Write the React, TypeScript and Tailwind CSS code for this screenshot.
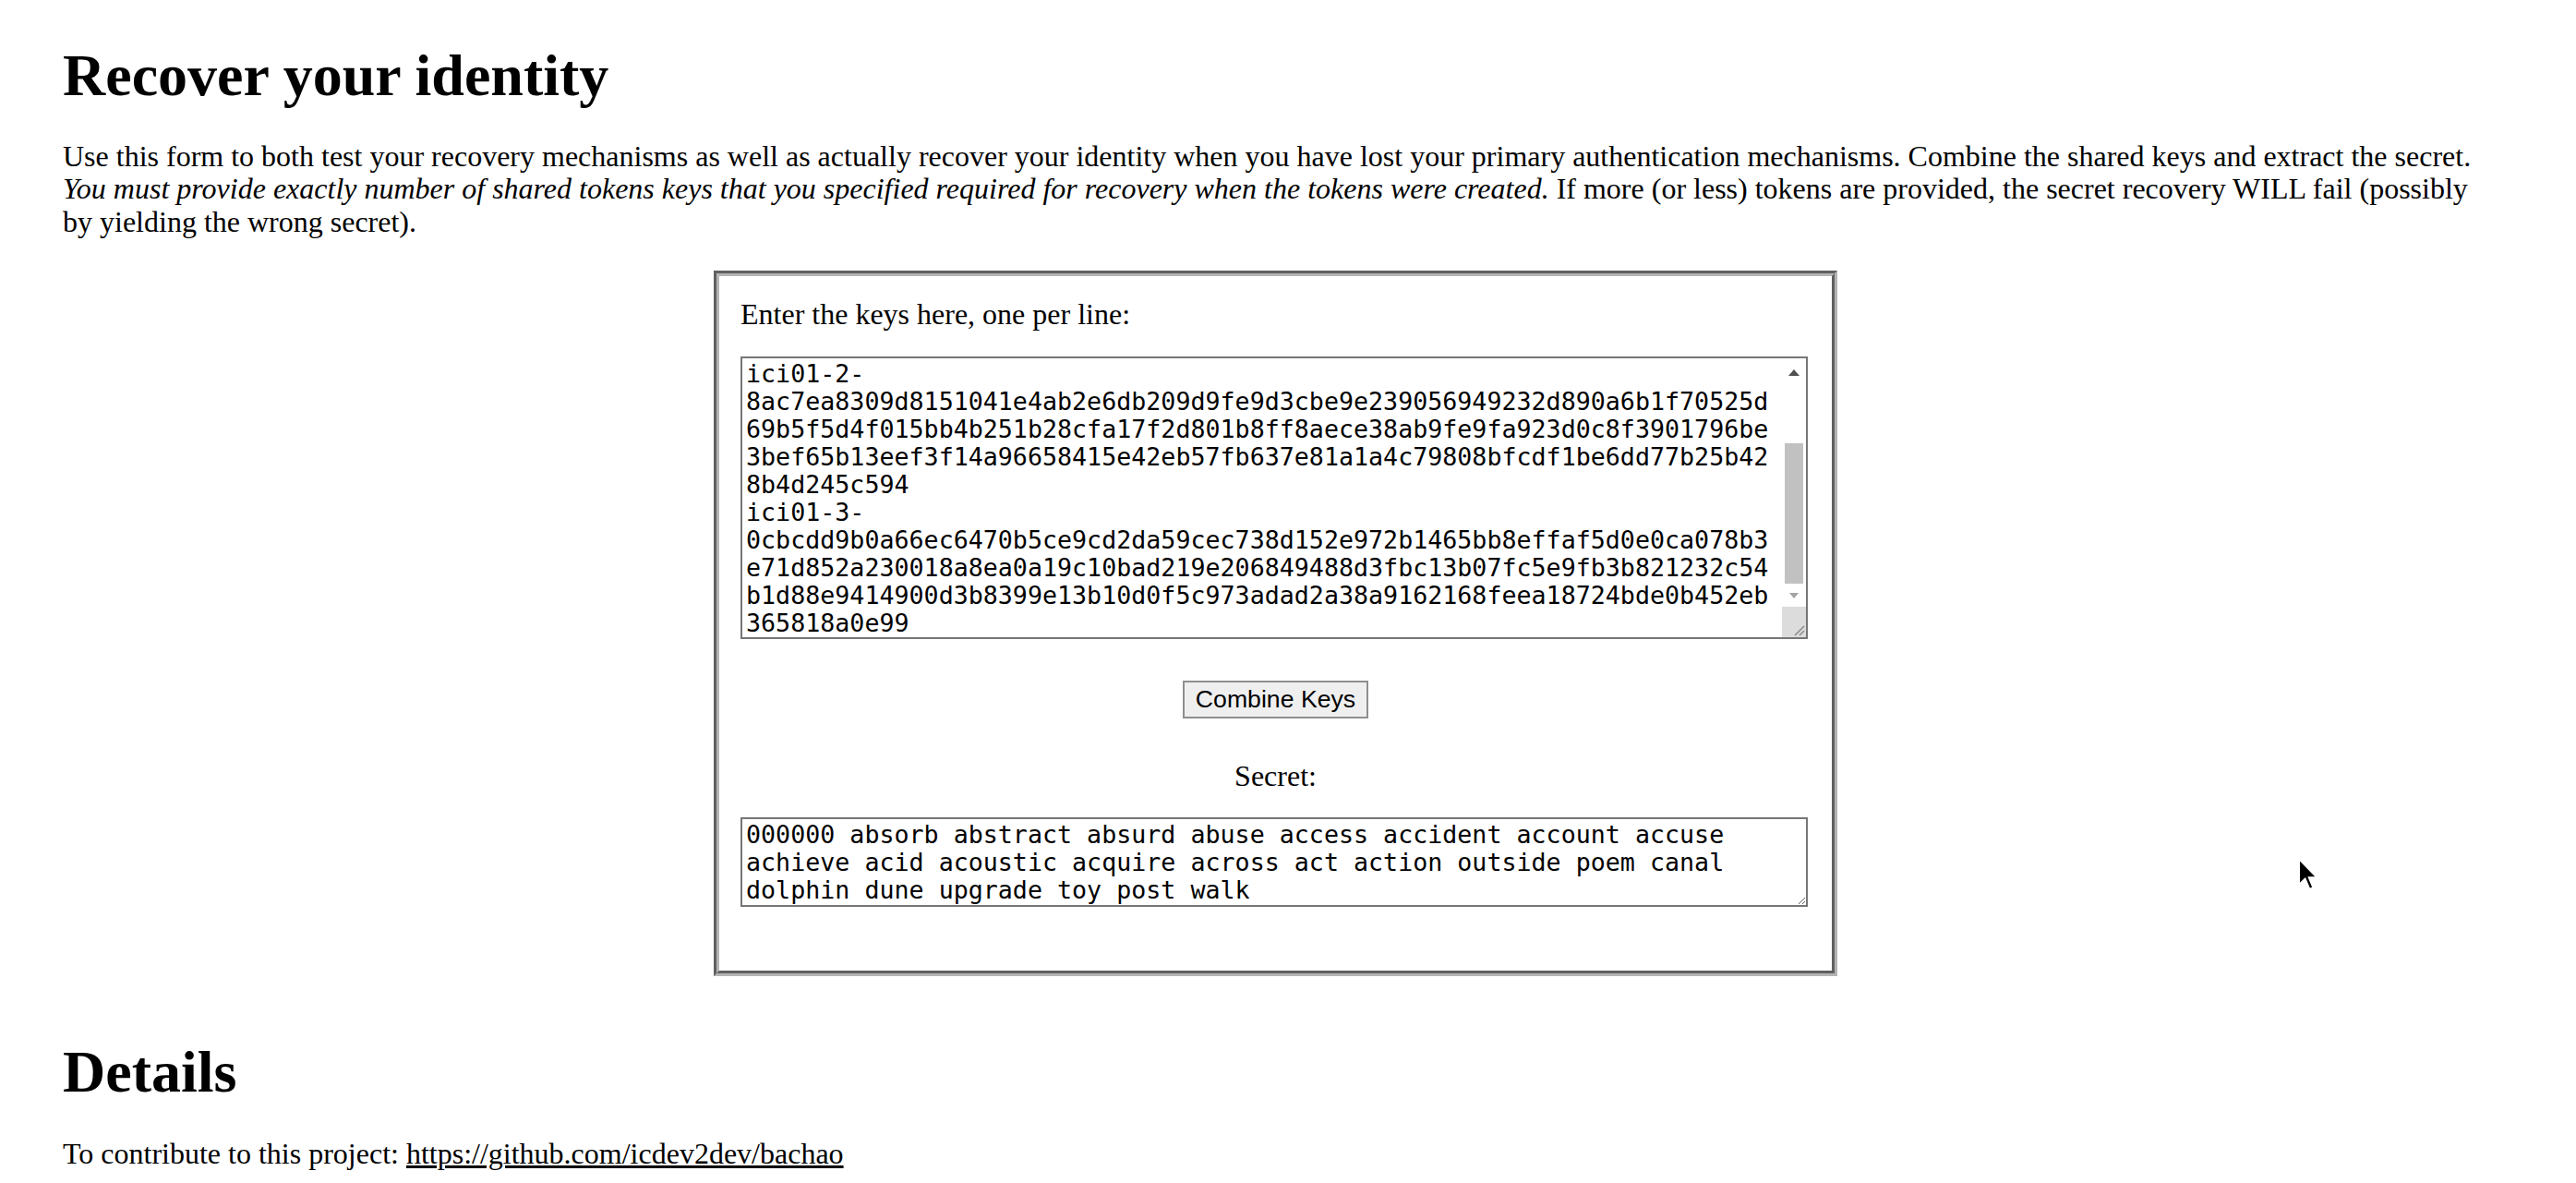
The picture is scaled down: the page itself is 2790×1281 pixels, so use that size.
import React from "react";

const keys = [
  "ici01-2-8ac7ea8309d8151041e4ab2e6db209d9fe9d3cbe9e239056949232d890a6b1f70525d69b5f5d4f015bb4b251b28cfa17f2d801b8ff8aece38ab9fe9fa923d0c8f3901796be3bef65b13eef3f14a96658415e42eb57fb637e81a1a4c79808bfcdf1be6dd77b25b428b4d245c594",
  "ici01-3-0cbcdd9b0a66ec6470b5ce9cd2da59cec738d152e972b1465bb8effaf5d0e0ca078b3e71d852a230018a8ea0a19c10bad219e206849488d3fbc13b07fc5e9fb3b821232c54b1d88e9414900d3b8399e13b10d0f5c973adad2a38a9162168feea18724bde0b452eb365818a0e99",
].join("\n");

const secret =
  "000000 absorb abstract absurd abuse access accident account accuse achieve acid acoustic acquire across act action outside poem canal dolphin dune upgrade toy post walk";

// classic scrollbar drawn over the keys box (the box is scrolled to its end)
const Scrollbar = () => (
  <div className="pointer-events-none absolute top-[2px] right-[2px] bottom-[2px] flex w-[26px] flex-col bg-white">
    <div className="flex h-[30px] items-center justify-center">
      <svg width="12" height="7" viewBox="0 0 12 7">
        <path d="M6 0 L12 7 L0 7 Z" fill="#505050" />
      </svg>
    </div>
    <div className="h-[62px]" />
    <div className="mx-[3px] h-[152px] bg-[#c1c1c1]" />
    <div className="flex h-[25px] items-center justify-center">
      <svg width="10" height="6" viewBox="0 0 10 6">
        <path d="M0 0 L10 0 L5 6 Z" fill="#a3a3a3" />
      </svg>
    </div>
    <div className="relative flex-1 bg-[#dcdcdc]">
      <svg className="absolute right-[1px] bottom-[1px]" width="14" height="14" viewBox="0 0 14 14">
        <path d="M13 3 L3 13 M13 8 L8 13" stroke="#8a8a8a" strokeWidth="1.5" />
      </svg>
    </div>
  </div>
);

const App = () => {
  return (
    <div className="relative min-h-[1281px] bg-white text-black font-['Liberation_Serif',serif] text-[32px] leading-[35.5px]">
      <div className="ml-[68px] w-[2627px] pt-[46px]">
        <h1 className="text-[64px] font-bold leading-[71px]">Recover your identity</h1>
        <p className="mt-[34.5px]">
          Use this form to both test your recovery mechanisms as well as actually recover your identity when you have
          lost your primary authentication mechanisms. Combine the shared keys and extract the secret.{" "}
          <em>
            You must provide exactly number of shared tokens keys that you specified required for recovery when the
            tokens were created.
          </em>{" "}
          If more (or less) tokens are provided, the secret recovery WILL fail (possibly by yielding the wrong secret).
        </p>

        <div className="mx-auto mt-[35px] w-[1217px] border-[6px] border-[#b4b4b4] [border-style:groove] px-[23px] pt-[23.5px] pb-[69px]">
          <p>Enter the keys here, one per line:</p>
          <div className="relative mt-[28px] w-[1156px]">
            <textarea
              readOnly
              rows={10}
              defaultValue={keys}
              className="block h-[306px] w-[1156px] resize-none overflow-hidden border-2 border-[#767676] bg-white pt-[2px] pb-[1px] pl-[4px] pr-[32px] font-['DejaVu_Sans_Mono',monospace] text-[26.67px] leading-[30px] text-black outline-none"
            />
            <Scrollbar />
          </div>
          <div className="mt-[45px] flex justify-center">
            <button
              type="button"
              className="h-[41px] border-2 border-[#8f8f8f] bg-[#efefef] px-[12px] font-['Liberation_Sans',Arial,sans-serif] text-[26.67px] leading-none text-black"
            >
              Combine Keys
            </button>
          </div>
          <p className="mt-[44.5px] text-center">Secret:</p>
          <textarea
            readOnly
            rows={3}
            defaultValue={secret}
            className="mt-[27px] block h-[97px] w-[1156px] border-2 border-[#767676] bg-white pt-[2px] pb-[1px] px-[4px] font-['DejaVu_Sans_Mono',monospace] text-[26.67px] leading-[30px] text-black outline-none"
          />
        </div>

        <h1 className="mt-[68px] text-[64px] font-bold leading-[71px]">Details</h1>
        <p className="mt-[35.5px]">
          To contribute to this project:{" "}
          <a href="#" className="underline">
            https://github.com/icdev2dev/bachao
          </a>
        </p>
      </div>

      {/* mouse pointer left in the capture */}
      <svg className="pointer-events-none absolute left-[2489px] top-[929px]" width="22" height="36" viewBox="0 0 11 18">
        <path d="M0.5 0.5 L0.5 14.5 L3.8 11.4 L6.2 17 L8.2 16.1 L5.9 10.6 L10.3 10.6 Z" fill="#000" stroke="#fff" strokeWidth="1" />
      </svg>
    </div>
  );
};

export default App;
